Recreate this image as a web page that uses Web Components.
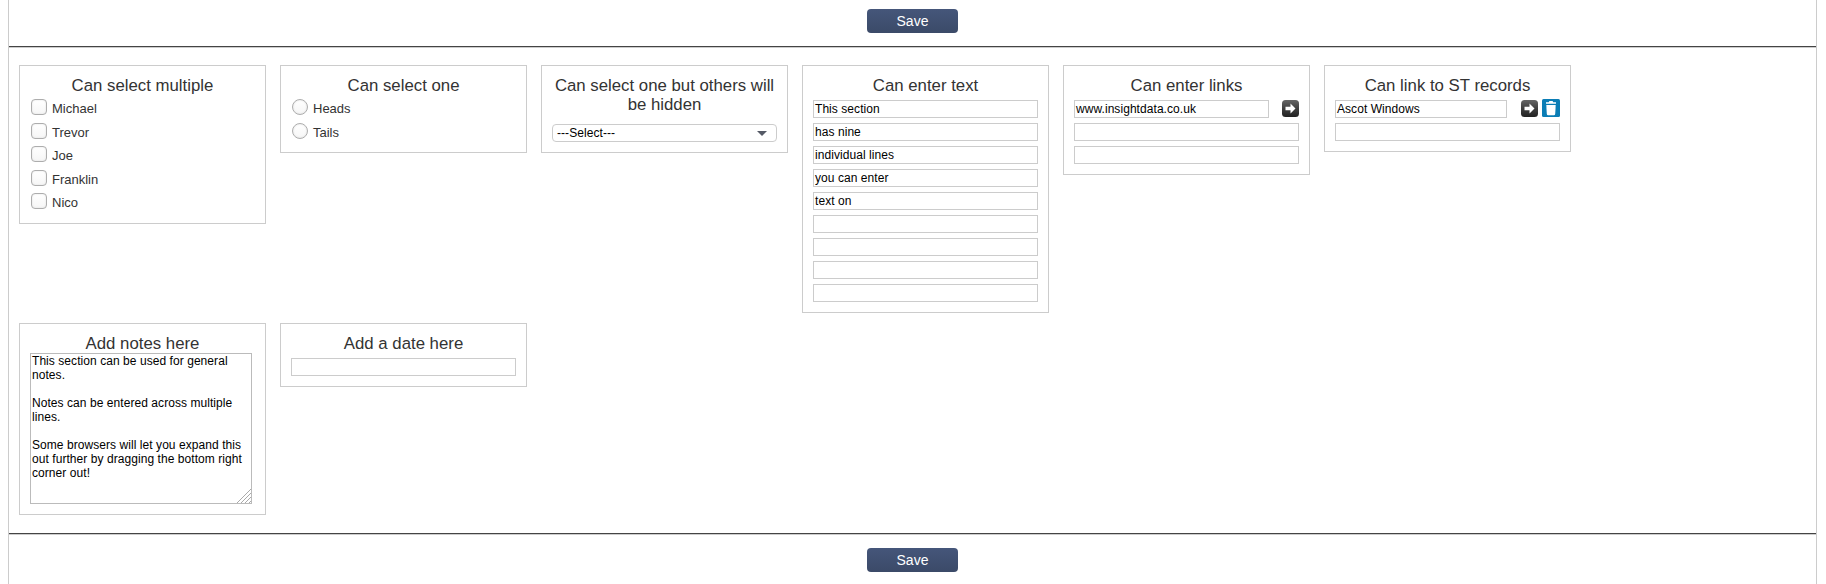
<!DOCTYPE html>
<html lang="en"><head><meta charset="utf-8"><title>Form</title>
<style>
html,body{margin:0;padding:0;background:#fff;font-family:"Liberation Sans",Arial,sans-serif}
</style></head><body>
<x-page>
  <x-savebar slot="top"></x-savebar>
  <x-card title="Can select multiple">
    <x-choice kind="check">Michael</x-choice><x-choice kind="check">Trevor</x-choice><x-choice kind="check">Joe</x-choice><x-choice kind="check">Franklin</x-choice><x-choice kind="check">Nico</x-choice>
  </x-card>
  <x-card title="Can select one">
    <x-choice kind="radio">Heads</x-choice><x-choice kind="radio">Tails</x-choice>
  </x-card>
  <x-card title="Can select one but others will be hidden" mode="select">
    <x-select>---Select---</x-select>
  </x-card>
  <x-card title="Can enter text" mode="fields">
    <x-field>This section</x-field><x-field>has nine</x-field><x-field>individual lines</x-field><x-field>you can enter</x-field><x-field>text on</x-field><x-field></x-field><x-field></x-field><x-field></x-field><x-field></x-field>
  </x-card>
  <x-card title="Can enter links" mode="fields">
    <x-field actions="arrow">www.insightdata.co.uk</x-field><x-field></x-field><x-field></x-field>
  </x-card>
  <x-card title="Can link to ST records" mode="fields">
    <x-field actions="arrow bin">Ascot Windows</x-field><x-field></x-field>
  </x-card>
  <x-card title="Add notes here">
    <x-notes>This section can be used for general notes.

Notes can be entered across multiple lines.

Some browsers will let you expand this out further by dragging the bottom right corner out!</x-notes>
  </x-card>
  <x-card title="Add a date here" mode="fields"><x-field></x-field></x-card>
  <x-savebar slot="bottom" pos="bottom"></x-savebar>
</x-page>
<script>
function def(name, css, html, init){
  customElements.define(name, class extends HTMLElement{
    constructor(){super();const r=this.attachShadow({mode:'open'});r.innerHTML='<style>'+css+'</style>'+html;}
    connectedCallback(){ if(init) init(this, this.shadowRoot); }
  });
}
def('x-page',
 `:host{display:flex;flex-direction:column;box-sizing:border-box;height:584px;margin:0 9px 0 8px;border:solid #ccc;border-width:0 1px;color:#333}
  .grid{display:flex;flex-wrap:wrap;align-items:flex-start;gap:10px 14px;padding:18px 0 18px 10px;flex:1;border-top:1px solid #444;border-bottom:1px solid #444;box-shadow:inset 0 1px 0 #ccc,0 1px 0 #ccc}`,
 `<slot name="top"></slot><div class="grid"><slot></slot></div><slot name="bottom"></slot>`);
def('x-savebar',
 `:host{display:flex;justify-content:center;align-items:flex-start;height:46px;padding-top:9px;box-sizing:border-box}
  :host([pos=bottom]){height:50px;padding-top:14px}
  button{width:91px;height:24px;border:0;border-radius:4px;background:linear-gradient(#45567a,#3b4a68);color:#fff;font:14px "Liberation Sans",Arial,sans-serif;padding:0}`,
 `<button type="button">Save</button>`);
def('x-card',
 `:host{display:block;box-sizing:border-box;width:247px;border:1px solid #ccc;padding:10px;background:#fff}
  h3{margin:0;font:400 16.8px/19px "Liberation Sans",Arial,sans-serif;color:#333;text-align:center}
  .body{display:flex;flex-direction:column}
  :host([mode=fields]) .body{margin-top:5px;gap:5px}
  :host([mode=select]) .body{margin-top:10px}`,
 `<h3></h3><div class="body"><slot></slot></div>`,
 (el,r)=>{r.querySelector('h3').textContent=el.getAttribute('title');el.removeAttribute('title');});
def('x-choice',
 `:host{display:flex;height:23.6px;box-sizing:border-box;padding:4px 0 0 1px;font-size:13px;color:#333}
  .box{flex:none;box-sizing:border-box;width:16px;height:16px;border:1px solid #adadad;border-radius:4px;background:linear-gradient(#fff,#f6f6f6);box-shadow:inset 0 0 2px #ddd}
  :host([kind=radio]) .box{border-radius:50%}
  .t{margin-left:5px;line-height:19px}`,
 `<span class="box"></span><span class="t"><slot></slot></span>`);
def('x-field',
 `:host{display:flex;align-items:flex-start;height:18px;font-size:12px;letter-spacing:.06px;color:#000}
  .in{flex:1;min-width:0;box-sizing:border-box;height:18px;border:1px solid #ccc;padding:0 1px;line-height:16px;white-space:nowrap;overflow:hidden;background:#fff}
  .acts{display:flex;gap:4px;margin-left:13px}
  .acts:empty{display:none}
  svg{display:block}`,
 `<div class="in"><slot></slot></div><div class="acts"></div>`,
 (el,r)=>{
  const a=(el.getAttribute('actions')||'').split(' ').filter(Boolean);
  const arrow=`<svg width="17" height="17" viewBox="0 0 17 17"><defs><linearGradient id="g" x1="0" y1="0" x2="0" y2="1"><stop offset="0" stop-color="#666"/><stop offset=".5" stop-color="#3f3f3f"/><stop offset="1" stop-color="#222"/></linearGradient></defs><rect x="0" y="0" width="17" height="17" rx="3.5" fill="url(#g)"/><path d="M3.5 6.8h5V3.6l5 4.9-5 4.9v-3.2h-5z" fill="#fff"/></svg>`;
  const bin=`<svg width="18" height="18" viewBox="0 0 18 18" style="margin-top:-1px"><rect width="18" height="18" rx="1.5" fill="#0b7db5"/><path d="M6.8 3.2q0-1.2 1.2-1.2h2q1.2 0 1.2 1.2H14v1.5H4V3.2z" fill="#fff"/><path d="M4.3 6l9.4 0-.5 9q-.1 1.2-1.3 1.2H6.1q-1.2 0-1.3-1.2z" fill="#fff"/></svg>`;
  r.querySelector('.acts').innerHTML=a.map(x=>x==='arrow'?arrow:bin).join('');
  if(a.length===2) r.querySelector('.acts').style.marginLeft='14px';
 });
def('x-select',
 `:host{display:flex;align-items:center;justify-content:space-between;box-sizing:border-box;height:18px;border:1px solid #ccc;border-radius:4px;padding:0 9px 0 4px;font-size:12px;letter-spacing:.06px;color:#000;background:#fff}
  i{width:0;height:0;border:5px solid transparent;border-top:5px solid #555a66;border-bottom:0}`,
 `<span><slot></slot></span><i></i>`);
def('x-notes',
 `:host{display:block;position:relative;width:222px;height:151px}
  textarea{display:block;box-sizing:border-box;width:222px;height:151px;margin:0;border:1px solid #bbb;padding:0 1px;font:12px/14px "Liberation Sans",Arial,sans-serif;letter-spacing:.06px;color:#000;background:#fff;outline:0;overflow:hidden;border-radius:0;resize:none}
  svg{position:absolute;right:1px;bottom:1px}`,
 `<textarea></textarea><svg width="14" height="14" viewBox="0 0 14 14" fill="none" stroke="#aaa"><path d="M14 0L0 14M14 4L4 14M14 8L8 14M14 12L12 14"/></svg>`,
 (el,r)=>{r.querySelector('textarea').textContent=el.textContent;});
</script>
</body></html>
